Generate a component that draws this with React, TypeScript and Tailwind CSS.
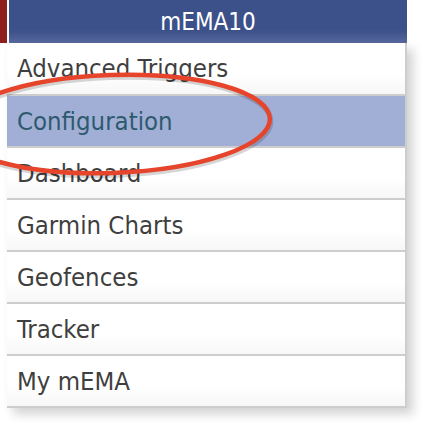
const items = [
  { label: 'Advanced Triggers', height: 'h-[51px]' },
  { label: 'Configuration', active: true },
  { label: 'Dashboard' },
  { label: 'Garmin Charts' },
  { label: 'Geofences' },
  { label: 'Tracker' },
  { label: 'My mEMA' },
];

const font = { fontFamily: '"DejaVu Sans Condensed", "DejaVu Sans", sans-serif' };

export default function App() {
  return (
    <div className="relative w-[422px] h-[422px] overflow-hidden bg-white" style={font}>
      <div className="flex h-[43px]">
        <div className="w-[7px] bg-[#8e1f1c]" />
        <div className="ml-[2px] w-[398px] flex items-center justify-center bg-gradient-to-b from-[#3c5189] from-70% to-[#56679b] text-white text-[24px]">
          mEMA10
        </div>
      </div>
      <ul className="ml-[7px] w-[400px] border-r-2 border-[#cdcdcd] bg-white shadow-[6px_6px_10px_rgba(0,0,0,0.18)]">
        {items.map(item => (
          <li
            key={item.label}
            className={`${item.height ?? 'h-[50px]'} box-content flex items-center pl-[10px] border-b-2 border-[#cdcdcd] text-[25.5px] ${
              item.active
                ? 'bg-[#a1afd7] text-[#2e5a6d]'
                : 'bg-gradient-to-b from-white from-60% to-[#f7f7f7] text-[#3f3f3f]'
            }`}
          >
            {item.label}
          </li>
        ))}
      </ul>
      <svg className="absolute left-0 top-0 pointer-events-none" width="422" height="422">
        <ellipse
          cx="112"
          cy="124"
          rx="158"
          ry="49"
          fill="none"
          stroke="rgba(0,0,0,0.16)"
          strokeWidth="5"
          transform="translate(1 2.5) rotate(-2 112 124)"
        />
        <ellipse
          cx="112"
          cy="124"
          rx="158"
          ry="49"
          fill="none"
          stroke="#e6452b"
          strokeWidth="4.5"
          transform="rotate(-2 112 124)"
        />
      </svg>
    </div>
  );
}
